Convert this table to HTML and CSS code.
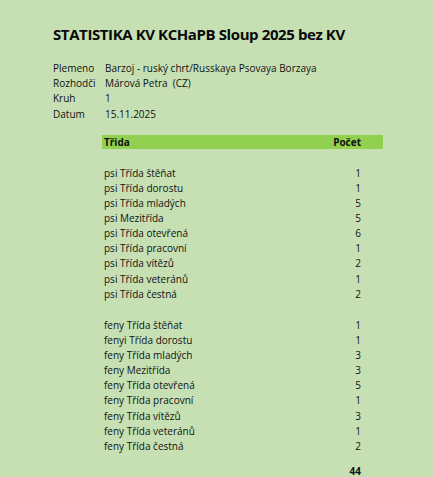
FILE: index.html
```html
<!DOCTYPE html>
<html lang="cs">
<head>
<meta charset="utf-8">
<link rel="stylesheet" href="styles.css">
</head>
<body>
<div class="sheet">
  <h1 class="title">STATISTIKA KV KCHaPB Sloup 2025 bez KV</h1>
  <div class="info">
    <span>Plemeno</span><span>Barzoj - ruský chrt/Russkaya Psovaya Borzaya</span>
    <span>Rozhodči</span><span>Márová Petra&nbsp; (CZ)</span>
    <span>Kruh</span><span>1</span>
    <span>Datum</span><span>15.11.2025</span>
  </div>
  <div class="table">
    <div class="head"><span>Třida</span><span class="num">Počet</span></div>
    <div class="gap"></div>
    <div class="row"><span>psi Třída štěňat</span><span class="num">1</span></div>
    <div class="row"><span>psi Třída dorostu</span><span class="num">1</span></div>
    <div class="row"><span>psi Třída mladých</span><span class="num">5</span></div>
    <div class="row"><span>psi Mezitřída</span><span class="num">5</span></div>
    <div class="row"><span>psi Třída otevřená</span><span class="num">6</span></div>
    <div class="row"><span>psi Třída pracovní</span><span class="num">1</span></div>
    <div class="row"><span>psi Třída vítězů</span><span class="num">2</span></div>
    <div class="row"><span>psi Třída veteránů</span><span class="num">1</span></div>
    <div class="row"><span>psi Třída čestná</span><span class="num">2</span></div>
    <div class="gap"></div>
    <div class="row"><span>feny Třída štěňat</span><span class="num">1</span></div>
    <div class="row"><span>fenyi Třída dorostu</span><span class="num">1</span></div>
    <div class="row"><span>feny Třída mladých</span><span class="num">3</span></div>
    <div class="row"><span>feny Mezitřída</span><span class="num">3</span></div>
    <div class="row"><span>feny Třída otevřená</span><span class="num">5</span></div>
    <div class="row"><span>feny Třída pracovní</span><span class="num">1</span></div>
    <div class="row"><span>feny Třída vítězů</span><span class="num">3</span></div>
    <div class="row"><span>feny Třída veteránů</span><span class="num">1</span></div>
    <div class="row"><span>feny Třída čestná</span><span class="num">2</span></div>
    <div class="total"><span></span><span class="num">44</span></div>
  </div>
</div>
</body>
</html>
```
FILE: styles.css
```css
html, body {
  margin: 0;
  padding: 0;
  background: #c6e0b4;
}
body {
  width: 434px;
  height: 477px;
  overflow: hidden;
  font-family: "Open Sans", "Liberation Sans", sans-serif;
  font-size: 10px;
  color: #111;
}
.sheet {
  padding: 22px 0 0 53px;
}
.title {
  margin: 0;
  font-size: 15px;
  font-weight: 700;
  line-height: 24px;
  letter-spacing: -0.4px;
  color: #0a0a0a;
}
.info {
  margin-top: 14px;
  display: grid;
  grid-template-columns: 52px auto;
  grid-auto-rows: 15.3px;
  align-items: center;
}
.table {
  margin: 14px 0 0 49px;
  width: 281px;
}
.head, .row, .total {
  display: grid;
  grid-template-columns: 1fr 60px;
  align-items: center;
  height: 15.1px;
}
.head {
  background: #92d050;
  height: 14px;
  font-weight: 700;
  padding-left: 2px;
}
.row {
  padding-left: 2px;
}
.gap {
  height: 16.2px;
}
.num {
  text-align: right;
  padding-right: 22px;
}
.total {
  margin-top: 10px;
  font-weight: 700;
}
```
